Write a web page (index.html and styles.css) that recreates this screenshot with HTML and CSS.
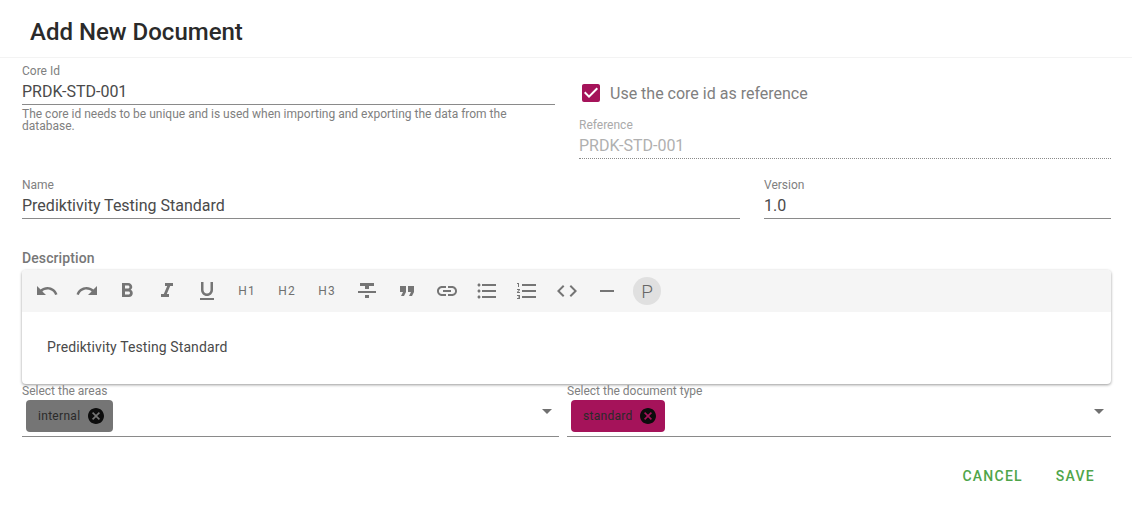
FILE: index.html
```html
<!DOCTYPE html>
<html lang="en">
<head>
    <meta charset="UTF-8">
    <meta name="viewport" content="width=device-width, initial-scale=1.0">
    <title>Add New Document</title>
    <link rel="stylesheet" href="styles.css">
</head>
<body>
    <div class="dialog">
        <header class="dialog-title">Add New Document</header>
        <form class="dialog-body">
            <div class="row row-core">
                <div class="col-core">
                    <div class="field">
                        <label class="field-label" for="coreId">Core Id</label>
                        <input class="field-input" id="coreId" type="text" value="PRDK-STD-001">
                    </div>
                    <p class="field-hint">The core id needs to be unique and is used when importing and exporting the data from the database.</p>
                </div>
                <div class="col-ref">
                    <label class="check">
                        <svg class="check-box" viewBox="3 3 18 18"><path d="M10,17L5,12L6.41,10.59L10,14.17L17.59,6.58L19,8M19,3H5C3.89,3 3,3.89 3,5V19A2,2 0 0,0 5,21H19A2,2 0 0,0 21,19V5C21,3.89 20.1,3 19,3Z"/></svg>
                        <span>Use the core id as reference</span>
                    </label>
                    <div class="field field-disabled">
                        <label class="field-label" for="reference">Reference</label>
                        <input class="field-input" id="reference" type="text" value="PRDK-STD-001" disabled>
                    </div>
                </div>
            </div>

            <div class="row row-name">
                <div class="field col-name">
                    <label class="field-label" for="docName">Name</label>
                    <input class="field-input" id="docName" type="text" value="Prediktivity Testing Standard">
                </div>
                <div class="field col-version">
                    <label class="field-label" for="version">Version</label>
                    <input class="field-input" id="version" type="text" value="1.0">
                </div>
            </div>

            <div class="editor-label">Description</div>
            <div class="editor">
                <div class="toolbar">
                    <button type="button" class="tool"><svg viewBox="0 0 24 24"><path d="M12.5,8C9.85,8 7.45,9 5.6,10.6L2,7V16H11L7.38,12.38C8.77,11.22 10.54,10.5 12.5,10.5C16.04,10.5 19.05,12.81 20.1,16L22.47,15.22C21.08,11.03 17.15,8 12.5,8Z"/></svg></button>
                    <button type="button" class="tool"><svg viewBox="0 0 24 24"><path d="M18.4,10.6C16.55,9 14.15,8 11.5,8C6.85,8 2.92,11.03 1.54,15.22L3.9,16C4.95,12.81 7.95,10.5 11.5,10.5C13.45,10.5 15.23,11.22 16.62,12.38L13,16H22V7L18.4,10.6Z"/></svg></button>
                    <button type="button" class="tool"><svg viewBox="0 0 24 24"><path d="M15.6 10.79c.97-.67 1.65-1.77 1.65-2.79 0-2.26-1.75-4-4-4H7v14h7.04c2.09 0 3.71-1.7 3.71-3.79 0-1.52-.86-2.82-2.15-3.42zM10 6.5h3c.83 0 1.5.67 1.5 1.5s-.67 1.5-1.5 1.5h-3v-3zm3.5 9H10v-3h3.5c.83 0 1.5.67 1.5 1.5s-.67 1.5-1.5 1.5z"/></svg></button>
                    <button type="button" class="tool"><svg viewBox="0 0 24 24"><path d="M10 4v3h2.21l-3.42 8H6v3h8v-3h-2.21l3.42-8H18V4z"/></svg></button>
                    <button type="button" class="tool"><svg viewBox="0 0 24 24"><path d="M12 17c3.31 0 6-2.69 6-6V3h-2.5v8c0 1.93-1.57 3.5-3.5 3.5S8.5 12.93 8.5 11V3H6v8c0 3.31 2.69 6 6 6zm-7 2v2h14v-2H5z"/></svg></button>
                    <button type="button" class="tool tool-text">H1</button>
                    <button type="button" class="tool tool-text">H2</button>
                    <button type="button" class="tool tool-text">H3</button>
                    <button type="button" class="tool"><svg viewBox="0 0 24 24"><path d="M10 19h4v-3h-4v3zM5 4v3h5v3h4V7h5V4H5zM3 14h18v-2H3v2z"/></svg></button>
                    <button type="button" class="tool"><svg viewBox="0 0 24 24"><path d="M6 17h3l2-4V7H5v6h3zm8 0h3l2-4V7h-6v6h3z"/></svg></button>
                    <button type="button" class="tool"><svg viewBox="0 0 24 24"><path d="M3.9 12c0-1.71 1.39-3.1 3.1-3.1h4V7H7c-2.76 0-5 2.24-5 5s2.24 5 5 5h4v-1.9H7c-1.71 0-3.1-1.39-3.1-3.1zM8 13h8v-2H8v2zm9-6h-4v1.9h4c1.71 0 3.1 1.39 3.1 3.1s-1.39 3.1-3.1 3.1h-4V17h4c2.76 0 5-2.24 5-5s-2.24-5-5-5z"/></svg></button>
                    <button type="button" class="tool"><svg viewBox="0 0 24 24"><path d="M4 10.5c-.83 0-1.5.67-1.5 1.5s.67 1.5 1.5 1.5 1.5-.67 1.5-1.5-.67-1.5-1.5-1.5zm0-6c-.83 0-1.5.67-1.5 1.5S3.17 7.5 4 7.5 5.5 6.83 5.5 6 4.83 4.5 4 4.5zm0 12c-.83 0-1.5.68-1.5 1.5s.68 1.5 1.5 1.5 1.5-.68 1.5-1.5-.67-1.5-1.5-1.5zM7 19h14v-2H7v2zm0-6h14v-2H7v2zm0-8v2h14V5H7z"/></svg></button>
                    <button type="button" class="tool"><svg viewBox="0 0 24 24"><path d="M2 17h2v.5H3v1h1v.5H2v1h3v-4H2v1zm1-9h1V4H2v1h1v3zm-1 3h1.8L2 13.1v.9h3v-1H3.2L5 10.9V10H2v1zm5-6v2h14V5H7zm0 14h14v-2H7v2zm0-6h14v-2H7v2z"/></svg></button>
                    <button type="button" class="tool"><svg viewBox="0 0 24 24"><path d="M9.4 16.6L4.8 12l4.6-4.6L8 6l-6 6 6 6 1.4-1.4zm5.2 0l4.6-4.6-4.6-4.6L16 6l6 6-6 6-1.4-1.4z"/></svg></button>
                    <button type="button" class="tool"><svg viewBox="0 0 24 24"><path d="M19 13H5v-2h14v2z"/></svg></button>
                    <button type="button" class="tool tool-p">P</button>
                </div>
                <div class="editor-content">Prediktivity Testing Standard</div>
            </div>

            <div class="row row-select">
                <div class="select select-areas">
                    <div class="select-label">Select the areas</div>
                    <div class="select-box">
                        <span class="chip chip-grey">internal
                            <svg class="chip-close" viewBox="2 2 20 20"><path d="M12,2C17.53,2 22,6.47 22,12C22,17.53 17.53,22 12,22C6.47,22 2,17.53 2,12C2,6.47 6.47,2 12,2M15.59,7L12,10.59L8.41,7L7,8.41L10.59,12L7,15.59L8.41,17L12,13.41L15.59,17L17,15.59L13.41,12L17,8.41L15.59,7Z"/></svg>
                        </span>
                        <svg class="select-arrow" viewBox="7 10 10 5"><path d="M7,10L12,15L17,10H7Z"/></svg>
                    </div>
                </div>
                <div class="select select-type">
                    <div class="select-label">Select the document type</div>
                    <div class="select-box">
                        <span class="chip chip-pink">standard
                            <svg class="chip-close" viewBox="2 2 20 20"><path d="M12,2C17.53,2 22,6.47 22,12C22,17.53 17.53,22 12,22C6.47,22 2,17.53 2,12C2,6.47 6.47,2 12,2M15.59,7L12,10.59L8.41,7L7,8.41L10.59,12L7,15.59L8.41,17L12,13.41L15.59,17L17,15.59L13.41,12L17,8.41L15.59,7Z"/></svg>
                        </span>
                        <svg class="select-arrow" viewBox="7 10 10 5"><path d="M7,10L12,15L17,10H7Z"/></svg>
                    </div>
                </div>
            </div>

            <div class="actions">
                <button type="button" class="btn-text">Cancel</button>
                <button type="button" class="btn-text">Save</button>
            </div>
        </form>
    </div>
</body>
</html>
```

FILE: styles.css
```css
body {
    font-family: 'Roboto', 'Liberation Sans', sans-serif;
    background-color: #ffffff;
    color: #333;
    margin: 0;
    padding: 0;
}

.dialog {
    width: 1132px;
    height: 507px;
    overflow: hidden;
}

.dialog-title {
    height: 58px;
    box-sizing: border-box;
    padding: 16px 30px 0;
    font-size: 24px;
    line-height: 32px;
    font-weight: 500;
    color: #2a2a2a;
    border-bottom: 1px solid #f3f3f3;
}

.dialog-body {
    padding: 6px 21px 0 22px;
}

.row {
    display: flex;
}

/* text fields */
.field-label {
    display: block;
    font-size: 12px;
    line-height: 14px;
    color: #808080;
}

.field-input {
    display: block;
    width: 100%;
    box-sizing: border-box;
    height: 27px;
    padding: 0;
    border: none;
    border-bottom: 1px solid #8a8a8a;
    outline: none;
    background: none;
    font-family: inherit;
    font-size: 16px;
    color: #4a4a4a;
}

.field-hint {
    margin: 3px 0 0;
    font-size: 12px;
    line-height: 12px;
    color: #808080;
}

.row-core {
    height: 114px;
    gap: 24px;
}

.col-core {
    width: 533px;
}

.col-ref {
    width: 532px;
}

.check {
    display: flex;
    align-items: center;
    height: 18px;
    margin: 20px 0 0 3px;
    font-size: 16px;
    color: #808080;
}

.check-box {
    width: 18px;
    height: 18px;
    margin-right: 10px;
    fill: #a5135a;
}

.field-disabled {
    margin-top: 16px;
}

.field-disabled .field-label {
    color: #aaa;
}

.field-disabled .field-input {
    color: #b0b0b0;
    border-bottom: 1px dotted #8a8a8a;
}

.row-name {
    gap: 24px;
}

.col-name {
    width: 718px;
}

.col-version {
    width: 347px;
}

/* editor */
.editor-label {
    margin-top: 31px;
    font-size: 14px;
    line-height: 16px;
    font-weight: 500;
    letter-spacing: 0.1px;
    color: #777;
}

.editor {
    margin-top: 4px;
    width: 1089px;
    height: 114px;
    border-radius: 4px;
    overflow: hidden;
    box-shadow: 0 1px 3px rgba(0, 0, 0, 0.4);
}

.toolbar {
    display: flex;
    align-items: center;
    gap: 12px;
    height: 42px;
    padding-left: 11px;
    background-color: #f5f5f5;
}

.tool {
    display: flex;
    align-items: center;
    justify-content: center;
    flex: none;
    width: 28px;
    height: 28px;
    padding: 0;
    border: none;
    border-radius: 50%;
    background: none;
    font-family: inherit;
    color: #707070;
}

.tool svg {
    width: 24px;
    height: 24px;
    fill: #757575;
}

.tool-text {
    font-size: 12px;
    letter-spacing: 1px;
}

.tool-p {
    font-size: 19px;
    font-weight: 300;
    color: #666;
    background-color: #e0e0e0;
}

.editor-content {
    padding: 26px 25px 0;
    font-size: 14px;
    line-height: 18px;
    letter-spacing: 0.1px;
    color: #4a4a4a;
}

/* selects */
.row-select {
    gap: 8px;
}

.select-areas {
    width: 537px;
}

.select-type {
    width: 544px;
}

.select-label {
    font-size: 12px;
    line-height: 14px;
    color: #808080;
}

.select-box {
    display: flex;
    align-items: flex-start;
    justify-content: space-between;
    height: 39px;
    box-sizing: border-box;
    padding: 2px 7px 0 4px;
    border-bottom: 1px solid #8a8a8a;
}

.select-arrow {
    width: 10px;
    height: 5px;
    margin-top: 9px;
    fill: #707070;
}

.chip {
    display: inline-flex;
    align-items: center;
    height: 32px;
    padding: 0 9px 0 12px;
    border-radius: 4px;
    font-size: 12px;
    letter-spacing: 0.3px;
    color: #2a2a2a;
}

.chip-grey {
    background-color: #757575;
}

.chip-pink {
    background-color: #a5135a;
}

.chip-close {
    width: 16px;
    height: 16px;
    margin-left: 8px;
    fill: #0c0c0c;
}

.chip-pink .chip-close {
    margin-left: 7px;
}

/* buttons */
.actions {
    display: flex;
    justify-content: flex-end;
    gap: 33px;
    margin-top: 29px;
    padding-right: 16px;
}

.btn-text {
    padding: 0;
    border: none;
    background: none;
    font-family: inherit;
    font-size: 14px;
    line-height: 20px;
    font-weight: 500;
    letter-spacing: 1.25px;
    text-transform: uppercase;
    color: #4fa54a;
}
```
